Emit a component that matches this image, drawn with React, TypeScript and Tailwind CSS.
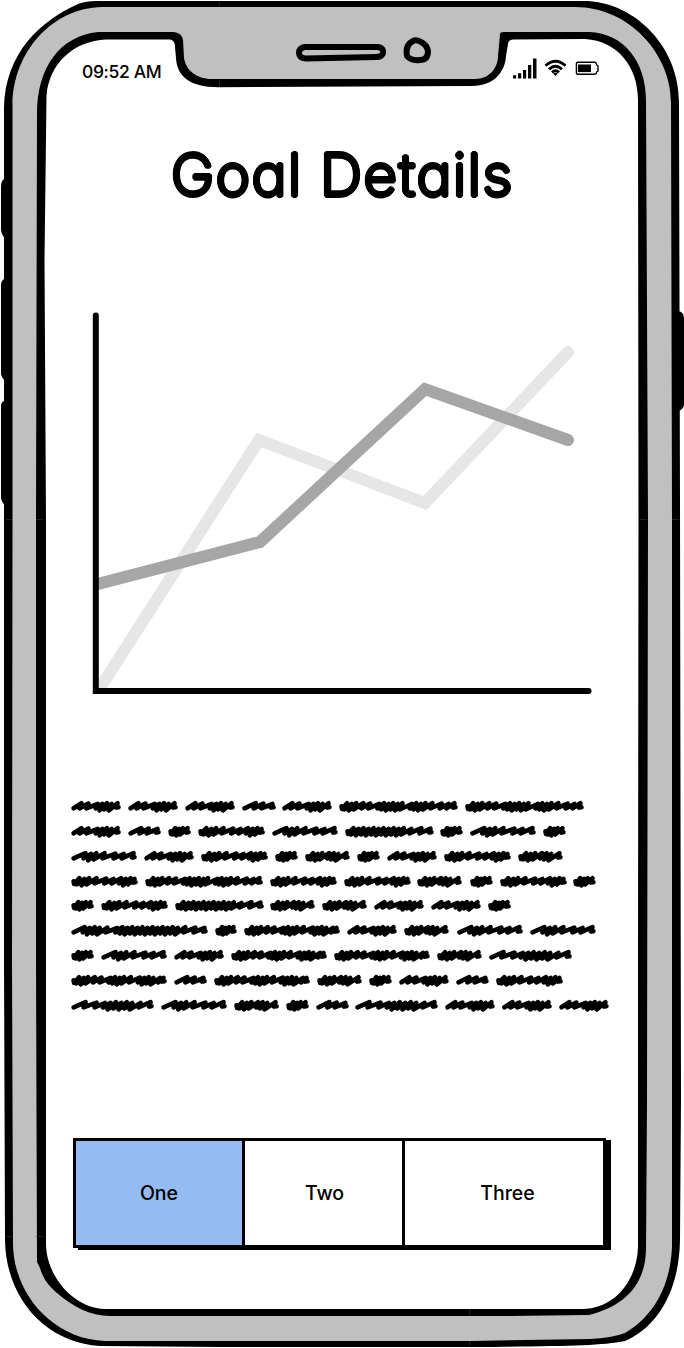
import type { ReactNode } from "react";

type Word = [start: number, width: number, shape: string];

// Scribble strokes: n = wide wave, m = regular wave, u = dense loop
const SHAPES: Record<string, string> = {
  xs: "uuum",
  sm: "nmn",
  md: "uuumuun",
  base: "mmnuuum",
  lgA: "nuumnmn",
  lgB: "uuumnmmuuu",
  xl: "nnmuuuuumn",
  xlB: "uuuuuuuuuuumnn",
  "2xl": "uuummnuuumnuuumu",
  "3xl": "uuummnuuuuunuuumnmm",
  "4xl": "nuuumnuuuuuuuuuuuumnn",
};

const LINES: Word[][] = [
  [[71, 50, "base"], [128, 50, "base"], [185, 50, "base"], [242, 34, "sm"], [282, 50, "base"], [339, 119, "3xl"], [465, 119, "3xl"]],
  [[71, 50, "base"], [128, 33, "sm"], [168, 23, "xs"], [198, 67, "lgB"], [272, 66, "lgA"], [345, 89, "xlB"], [440, 23, "xs"], [470, 66, "lgA"], [543, 23, "xs"]],
  [[71, 66, "lgA"], [144, 50, "base"], [201, 67, "lgB"], [275, 23, "xs"], [305, 45, "md"], [357, 23, "xs"], [387, 50, "base"], [444, 67, "lgB"], [518, 45, "md"]],
  [[71, 67, "lgB"], [145, 118, "3xl"], [270, 67, "lgB"], [344, 67, "lgB"], [417, 45, "md"], [470, 23, "xs"], [500, 67, "lgB"], [573, 23, "xs"]],
  [[71, 23, "xs"], [101, 67, "lgB"], [175, 89, "xlB"], [270, 45, "md"], [322, 45, "md"], [374, 50, "base"], [431, 50, "base"], [488, 23, "xs"]],
  [[71, 137, "4xl"], [215, 22, "xs"], [244, 96, "2xl"], [347, 50, "base"], [404, 45, "md"], [457, 66, "lgA"], [530, 66, "lgA"]],
  [[71, 23, "xs"], [101, 66, "lgA"], [174, 50, "base"], [231, 96, "2xl"], [334, 96, "2xl"], [437, 45, "md"], [489, 83, "xl"]],
  [[71, 96, "2xl"], [174, 33, "sm"], [214, 96, "2xl"], [317, 45, "md"], [369, 23, "xs"], [399, 50, "base"], [456, 33, "sm"], [496, 67, "lgB"]],
  [[71, 83, "xl"], [161, 66, "lgA"], [234, 45, "md"], [286, 23, "xs"], [316, 33, "sm"], [355, 83, "xl"], [445, 50, "base"], [502, 50, "base"], [559, 50, "base"]],
];

function scribble(width: number, shape: string): string {
  const advance: Record<string, number> = { n: 10, m: 7.5, u: 5 };
  const strokes = shape.split("");
  const total = strokes.reduce((sum, s) => sum + advance[s], 0);
  const k = (width - 6) / total;
  let x = 2.5;
  let d = strokes[0] === "u" ? `M${x} 12L${x + 0.5} 14.6` : `M${x} 14`;
  strokes.forEach((s, i) => {
    const a = advance[s] * k;
    const dense = s === "u";
    const last = i === strokes.length - 1;
    const top = dense ? 8.9 + (i % 2) * 0.8 : 8.9 + (i % 3) * 0.4;
    const low = dense ? 15.2 + (i % 2) * 0.9 : 14.1;
    const peak = Math.min(x + a + 1, width - 3.5);
    d += ` L${peak.toFixed(1)} ${top}`;
    x += a;
    if (!last) d += ` L${(x - (dense ? 1.8 : 1)).toFixed(1)} ${low}`;
  });
  return `${d} L${width - 5} 13.3 L${width - 2.5} 12.9`;
}

function TextLine({ words }: { words: Word[] }) {
  return (
    <svg className="block h-[24.85px] w-[560px]" viewBox="60 0 560 24.85" aria-hidden="true">
      {words.map(([start, width, shape]) => (
        <path
          key={start}
          transform={`translate(${start} 0.3)`}
          d={scribble(width, SHAPES[shape])}
          fill="none"
          stroke="black"
          strokeWidth="4.6"
          strokeLinecap="round"
          strokeLinejoin="round"
        />
      ))}
    </svg>
  );
}

function PhoneFrame() {
  return (
    <svg className="absolute inset-0 h-[1348px] w-[684px]" viewBox="0 0 684 1348" aria-hidden="true">
      <path d="M4 179Q1 181 1 187V230Q2 236 5 238H12V179ZM4 279Q1 281 1 285V374Q2 379 5 380H12V279ZM4 401Q1 402 1 406V498Q2 503 5 505H12V401Z" />
      <path d="M678 311Q684 312 684 318V405Q683 410 678 411H670V311Z" />
      <path d="M96 1H588C637 4 679 48 679 102L680 500L681 1100L680 1240C679 1295 655 1328 625 1341C600 1346 565 1346 480 1347H220L100 1346C47 1343 6 1300 5 1240L4 960V108C5 52 42 20 78 4Q86 1 96 1Z" />
      <path fill="#c0c0c0" d="M102 7H575C630 7 671 55 671 102L672 520V1247C670 1292 649 1319 625 1333Q612 1338 590 1339L470 1341H105C52 1339 13 1293 13 1243L12 960L12.5 520V105C13 52 52 8 102 7Z" />
      <path d="M98 32H174Q182 33 183 40L184 58C186 70 196 79 212 79H475C490 79 498 67 498 56L500 34Q500 32 504 32H589C624 33 646 62 646 100L648 520L647 1100L646 1250C645 1288 621 1307 589 1315L500 1316H110C90 1316 72 1306 57 1293C49 1286 43 1279 40 1268Q39 1266 37 1262L36 960V520L37 114C37 67 60 36 98 32Z" />
      <path fill="white" d="M106 39.5H170Q175 40 175 47L176 58C177 76 189 87 218 87.3L472 86C494 86 505 72 506 56L508 44Q508 40 513 39.5L585 39C618 41 638 67 638 100L638.500 520L638 960V1247C637 1280 615 1309 582 1309H105C73 1308 46 1276 46 1243V520L44.5 260L46.5 96C49 63 74 41 106 39.5Z" />
      <path fill="none" stroke="black" strokeWidth="6" d="M305 47H378Q384 48 383 53Q382 57 376 57L306 58.500Q299 58 299 53Q299 48 305 47Z" />
      <path fill="none" stroke="black" strokeWidth="6" strokeLinejoin="round" d="M413 41Q416 39 421 42Q427 45 428 51Q428 60 420 60Q411 61 407 56Q405 45 413 41Z" />
      <path
        stroke="#333"
        strokeWidth="0.6"
        d="M6 519.500H12M36 519.500H43M640 519.500H647M672 519.500H679M6 1236.500H12M36 1236.500H43M219.500 2V7M219.500 80V87M469.500 1309V1315M469.500 1341V1346"
      />
    </svg>
  );
}

function StatusIcons() {
  return (
    <svg className="block h-6 w-[88px]" viewBox="512 57 88 24" aria-hidden="true">
      <path d="M513 75.300h3.200v3.200h-3.200ZM518 73.300h3.200v5.200h-3.200ZM523 70h3.200v8.500h-3.200ZM528 65h3.300v13.500h-3.300ZM533 58.500h3.500v20h-3.500Z" />
      <g fill="none" stroke="black" strokeWidth="2.800">
        <path d="M545.500 65.800Q555.500 56.800 565.500 65.800" />
        <path d="M549 69.200Q555.500 63.300 562 69.200" />
        <path d="M552 72.400Q555.500 69.200 559 72.400" />
      </g>
      <path d="M553.200 73.600Q555.500 71.900 557.800 73.600L555.500 76Z" />
      <path fill="none" stroke="black" strokeWidth="1.400" d="M577.500 62.300H595Q596.500 62.500 596.700 65L598 66V71L596.700 72Q596.500 74 595 74.200H577.500Q576.400 74 576.400 73V63.500Q576.400 62.500 577.500 62.300Z" />
      <path d="M578 64.500h13v7.600h-13Z" />
    </svg>
  );
}

function Chart() {
  return (
    <svg className="block h-[390px] w-[510px]" viewBox="90 310 510 390" role="img" aria-label="Goal progress">
      <defs>
        <clipPath id="plot-area">
          <path d="M98 310H600V688H98Z" />
        </clipPath>
      </defs>
      <g fill="none" strokeWidth="12" clipPath="url(#plot-area)" strokeLinecap="round">
        <path stroke="#e6e6e6" d="M98 691L259 440L425 503L568 352" />
        <path stroke="#a6a6a6" d="M98 584L260 542L425 389L568 440" />
      </g>
      <path d="M95.800 315.500V691H588.500" fill="none" stroke="black" strokeWidth="6" strokeLinecap="round" />
    </svg>
  );
}

function Tab({ children, className }: { children: ReactNode; className: string }) {
  return (
    <button className={`flex items-center justify-center pt-0.5 text-[19.5px] font-medium ${className}`}>
      {children}
    </button>
  );
}

export default function App() {
  return (
    <main className="relative h-[1348px] w-[684px] overflow-hidden bg-white font-['Inter',sans-serif] text-black [font-feature-settings:'cv11']">
      <PhoneFrame />
      <div className="relative flex h-full flex-col">
        <header className="flex h-[81px] items-end justify-between pr-[84px] pl-[82px]">
          <time className="mb-[-3px] text-[17.5px] leading-6 font-medium tracking-[-0.35px] whitespace-nowrap">09:52 AM</time>
          <StatusIcons />
        </header>
        <h1 className="mt-[54px] text-center text-[59px] leading-[80px] font-light tracking-[0.9px] whitespace-nowrap [text-shadow:1.6px_0_0_black,-1.6px_0_0_black,0_1.6px_0_black,0_-1.6px_0_black,1.15px_1.15px_0_black,-1.15px_1.15px_0_black,1.15px_-1.15px_0_black,-1.15px_-1.15px_0_black]">
          Goal Details
        </h1>
        <section className="mt-[95px] ml-[90px]">
          <Chart />
        </section>
        <section className="mt-[94px] ml-[60px]">
          {LINES.map((words, i) => (
            <TextLine key={i} words={words} />
          ))}
        </section>
        <nav className="mt-[120.500px] ml-[73px] flex h-[110px] w-[533px] border-[3px] border-black bg-white shadow-[5px_2px_0_black]">
          <Tab className="w-[166px] bg-[#94bbf2]">One</Tab>
          <Tab className="w-[160px] border-l-[3px] border-black pl-[2px]">Two</Tab>
          <Tab className="flex-1 border-l-[3px] border-black pl-[7px]">Three</Tab>
        </nav>
      </div>
    </main>
  );
}
